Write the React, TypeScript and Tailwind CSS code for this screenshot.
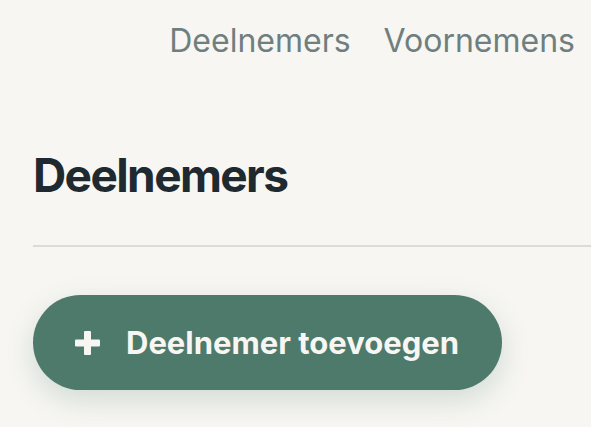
import React from "react";

export default function App() {
  return (
    <div
      className="w-[591px] h-[427px] bg-[#f7f6f2] overflow-hidden flex flex-col"
      style={{ fontFamily: "Inter, 'Open Sans', sans-serif" }}
    >
      <nav className="flex justify-end gap-[33px] pr-[16px] pt-[21px] text-[32px] leading-[40px] text-[#6f7f7f] tracking-[0px]">
        <span>Deelnemers</span>
        <span>Voornemens</span>
      </nav>
      <h1 className="ml-[33px] mt-[86px] text-[46px] leading-[56px] font-bold text-[#1e2a30] tracking-[-1.6px]">
        Deelnemers
      </h1>
      <div className="ml-[33px] mt-[42px] h-[2px] bg-[#dcdbd5]" />
      <div className="ml-[33px] mt-[48px]">
        <button className="h-[95px] w-[469px] rounded-full bg-[#4e7a6c] flex items-center pl-[42px] gap-[26px] text-[#f7f6f2] text-[31px] font-bold tracking-[0px] shadow-[0_10px_28px_rgba(78,122,108,0.22)]">
          <svg width="25" height="24" viewBox="0 0 25 24" className="shrink-0">
            <rect x="9" y="0" width="7" height="24" rx="1" fill="#f7f6f2" />
            <rect x="0" y="8.5" width="25" height="7" rx="1" fill="#f7f6f2" />
          </svg>
          <span className="mt-[2px]">Deelnemer toevoegen</span>
        </button>
      </div>
    </div>
  );
}
